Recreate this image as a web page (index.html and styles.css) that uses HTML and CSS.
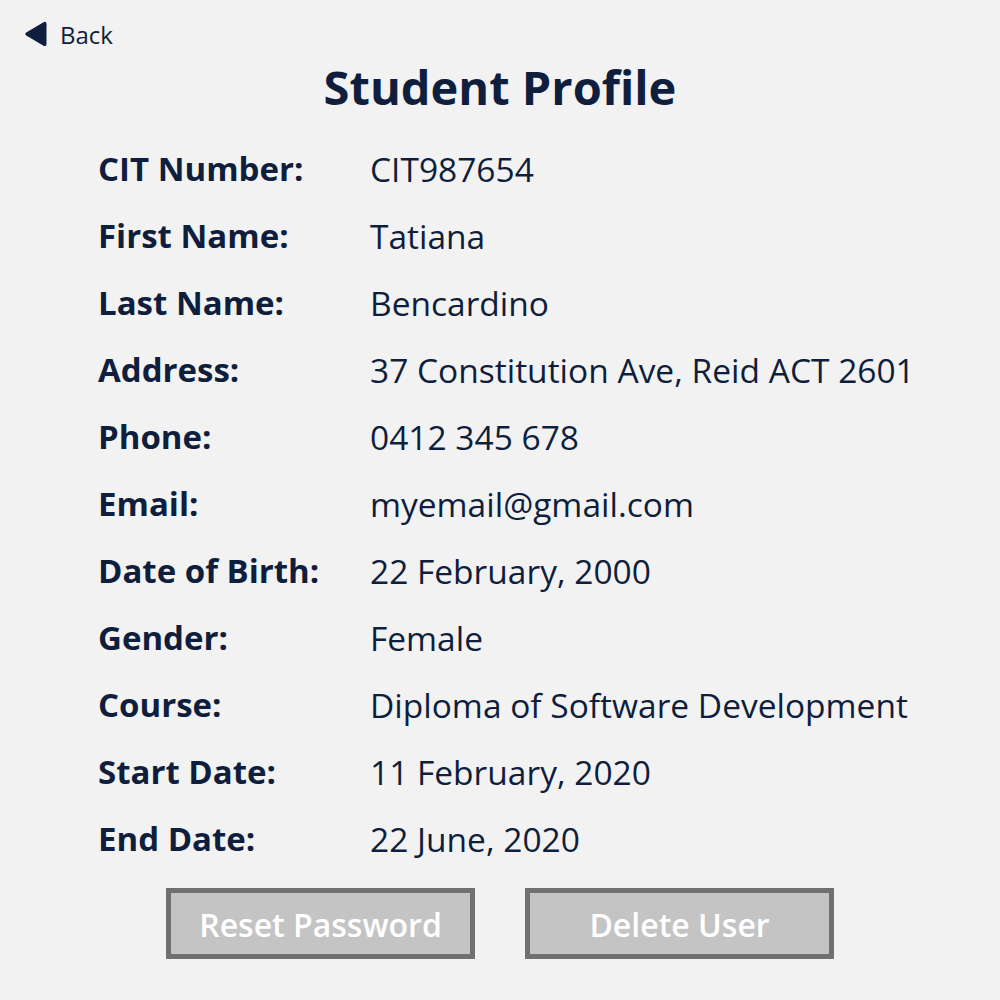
FILE: index.html
```html
<!DOCTYPE html>
<html>
<head>
<meta charset="utf-8">
<link rel="stylesheet" href="styles.css">
</head>
<body>
<div class="page">
  <a class="back" href="#">
    <svg class="back-icon" width="23" height="26" viewBox="0 0 23 26"><path d="M19.5 1.2 Q22.5 -0.2 22.5 3.2 L22.5 22.8 Q22.5 26.2 19.5 24.8 L2.2 14.4 Q0.3 13 2.2 11.6 Z" fill="#0f1e3c"/></svg>
    <span>Back</span>
  </a>
  <h1 class="title">Student Profile</h1>
  <div class="details">
    <div class="label">CIT Number:</div><div class="value">CIT987654</div>
    <div class="label">First Name:</div><div class="value">Tatiana</div>
    <div class="label">Last Name:</div><div class="value">Bencardino</div>
    <div class="label">Address:</div><div class="value">37 Constitution Ave, Reid ACT 2601</div>
    <div class="label">Phone:</div><div class="value">0412 345 678</div>
    <div class="label">Email:</div><div class="value">myemail@gmail.com</div>
    <div class="label">Date of Birth:</div><div class="value">22 February, 2000</div>
    <div class="label">Gender:</div><div class="value">Female</div>
    <div class="label">Course:</div><div class="value">Diploma of Software Development</div>
    <div class="label">Start Date:</div><div class="value">11 February, 2020</div>
    <div class="label">End Date:</div><div class="value">22 June, 2020</div>
  </div>
  <div class="actions">
    <button class="btn">Reset Password</button>
    <button class="btn">Delete User</button>
  </div>
</div>
</body>
</html>
```
FILE: styles.css
```css
html, body {
  margin: 0;
  padding: 0;
  background: #f2f2f2;
}
body {
  font-family: "Open Sans", "Noto Sans", sans-serif;
  color: #0f1e3c;
}
.page {
  width: 1000px;
  height: 1000px;
  box-sizing: border-box;
  padding-top: 18px;
}
.back {
  display: flex;
  align-items: center;
  gap: 13px;
  margin-left: 24px;
  color: #0f1e3c;
  text-decoration: none;
  font-size: 24px;
  height: 32px;
  width: max-content;
}
.back-icon {
  display: block;
}
.title {
  margin: 7px 0 0 0;
  text-align: center;
  font-size: 47px;
  font-weight: 700;
  line-height: 60px;
}
.details {
  display: grid;
  grid-template-columns: 272px auto;
  margin: 18px 0 0 98px;
  grid-auto-rows: 67px;
  align-items: center;
}
.label {
  font-weight: 700;
  font-size: 33px;
}
.value {
  font-size: 33.5px;
}
.actions {
  display: flex;
  justify-content: center;
  gap: 50px;
  margin-top: 16px;
}
.btn {
  width: 309px;
  height: 71px;
  box-sizing: border-box;
  border: 5px solid #707070;
  background: #c4c4c4;
  color: #ffffff;
  font-family: "Open Sans", "Noto Sans", sans-serif;
  font-weight: 600;
  font-size: 32px;
  padding: 2px 0 0 0;
}
```
